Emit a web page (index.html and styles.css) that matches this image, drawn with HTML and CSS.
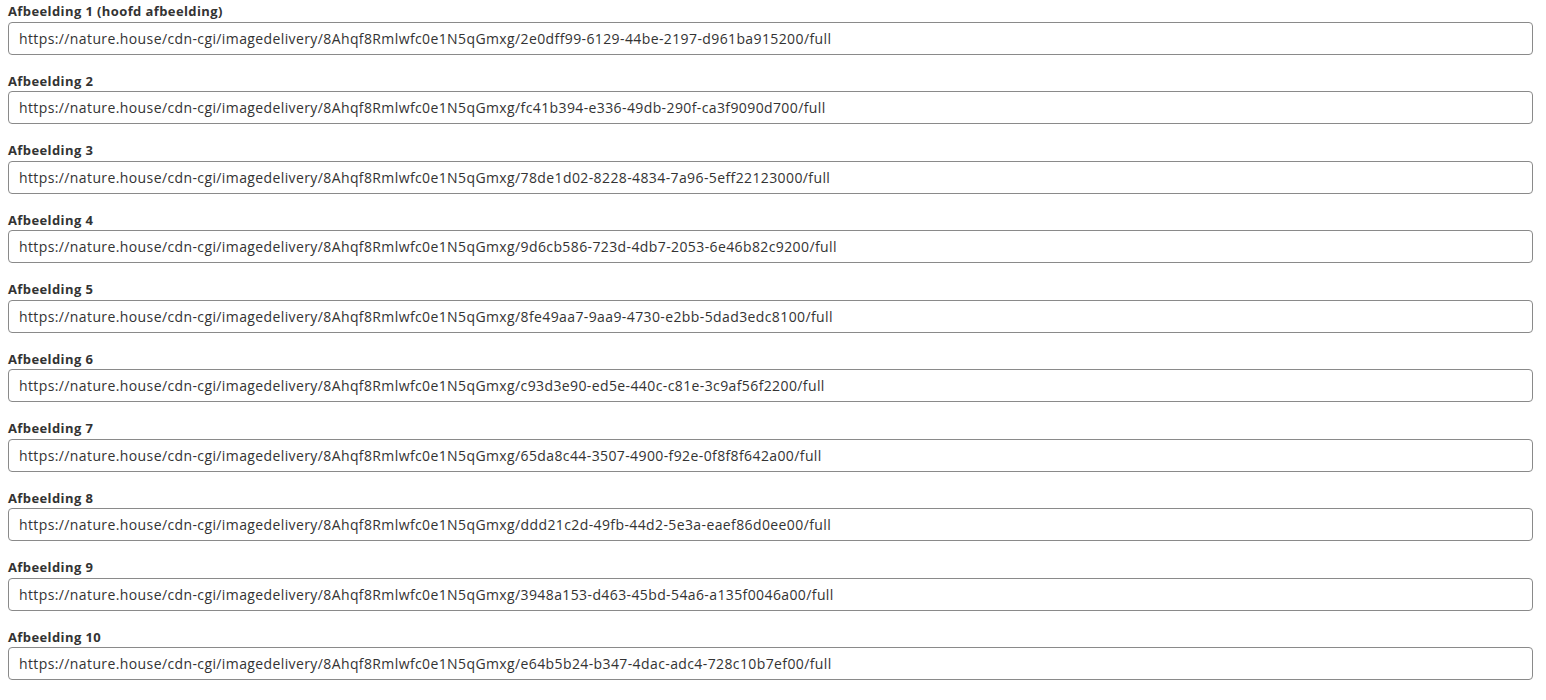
FILE: index.html
```html
<!DOCTYPE html>
<html lang="nl">

<head>
    <meta charset="UTF-8">
    <meta name="viewport" content="width=device-width, initial-scale=1.0">
    <title>Afbeeldingen</title>

    <link rel="stylesheet" href="styles.css">
</head>

<body>
    <form class="afbeeldingen-form">
        <div class="form-group">
            <label for="afb1">Afbeelding 1 (hoofd afbeelding)</label>
            <input type="text" id="afb1" name="afb1" value="https://nature.house/cdn-cgi/imagedelivery/8Ahqf8Rmlwfc0e1N5qGmxg/2e0dff99-6129-44be-2197-d961ba915200/full">
        </div>

        <div class="form-group">
            <label for="afb2">Afbeelding 2</label>
            <input type="text" id="afb2" name="afb2" value="https://nature.house/cdn-cgi/imagedelivery/8Ahqf8Rmlwfc0e1N5qGmxg/fc41b394-e336-49db-290f-ca3f9090d700/full">
        </div>

        <div class="form-group">
            <label for="afb3">Afbeelding 3</label>
            <input type="text" id="afb3" name="afb3" value="https://nature.house/cdn-cgi/imagedelivery/8Ahqf8Rmlwfc0e1N5qGmxg/78de1d02-8228-4834-7a96-5eff22123000/full">
        </div>

        <div class="form-group">
            <label for="afb4">Afbeelding 4</label>
            <input type="text" id="afb4" name="afb4" value="https://nature.house/cdn-cgi/imagedelivery/8Ahqf8Rmlwfc0e1N5qGmxg/9d6cb586-723d-4db7-2053-6e46b82c9200/full">
        </div>

        <div class="form-group">
            <label for="afb5">Afbeelding 5</label>
            <input type="text" id="afb5" name="afb5" value="https://nature.house/cdn-cgi/imagedelivery/8Ahqf8Rmlwfc0e1N5qGmxg/8fe49aa7-9aa9-4730-e2bb-5dad3edc8100/full">
        </div>

        <div class="form-group">
            <label for="afb6">Afbeelding 6</label>
            <input type="text" id="afb6" name="afb6" value="https://nature.house/cdn-cgi/imagedelivery/8Ahqf8Rmlwfc0e1N5qGmxg/c93d3e90-ed5e-440c-c81e-3c9af56f2200/full">
        </div>

        <div class="form-group">
            <label for="afb7">Afbeelding 7</label>
            <input type="text" id="afb7" name="afb7" value="https://nature.house/cdn-cgi/imagedelivery/8Ahqf8Rmlwfc0e1N5qGmxg/65da8c44-3507-4900-f92e-0f8f8f642a00/full">
        </div>

        <div class="form-group">
            <label for="afb8">Afbeelding 8</label>
            <input type="text" id="afb8" name="afb8" value="https://nature.house/cdn-cgi/imagedelivery/8Ahqf8Rmlwfc0e1N5qGmxg/ddd21c2d-49fb-44d2-5e3a-eaef86d0ee00/full">
        </div>

        <div class="form-group">
            <label for="afb9">Afbeelding 9</label>
            <input type="text" id="afb9" name="afb9" value="https://nature.house/cdn-cgi/imagedelivery/8Ahqf8Rmlwfc0e1N5qGmxg/3948a153-d463-45bd-54a6-a135f0046a00/full">
        </div>

        <div class="form-group">
            <label for="afb10">Afbeelding 10</label>
            <input type="text" id="afb10" name="afb10" value="https://nature.house/cdn-cgi/imagedelivery/8Ahqf8Rmlwfc0e1N5qGmxg/e64b5b24-b347-4dac-adc4-728c10b7ef00/full">
        </div>
    </form>
</body>

</html>
```

FILE: styles.css
```css
body {
    font-family: 'Open Sans', 'Liberation Sans', sans-serif;
    background-color: #ffffff;
    color: #333333;
    margin: 0;
    padding: 2px 13px 0 8px;
}

.form-group {
    margin-bottom: 17px;
}

.form-group label {
    display: block;
    font-size: 13px;
    font-weight: bold;
    letter-spacing: 0.4px;
    line-height: 18px;
    margin-bottom: 1.5px;
    color: #333333;
}

.form-group input[type="text"] {
    display: block;
    width: 100%;
    height: 33px;
    padding: 0 10px;
    border: 1px solid #8a8a8a;
    border-radius: 4px;
    font-family: inherit;
    font-size: 14px;
    letter-spacing: 0.39px;
    color: #333333;
    background-color: #ffffff;
    box-sizing: border-box;
}
```
